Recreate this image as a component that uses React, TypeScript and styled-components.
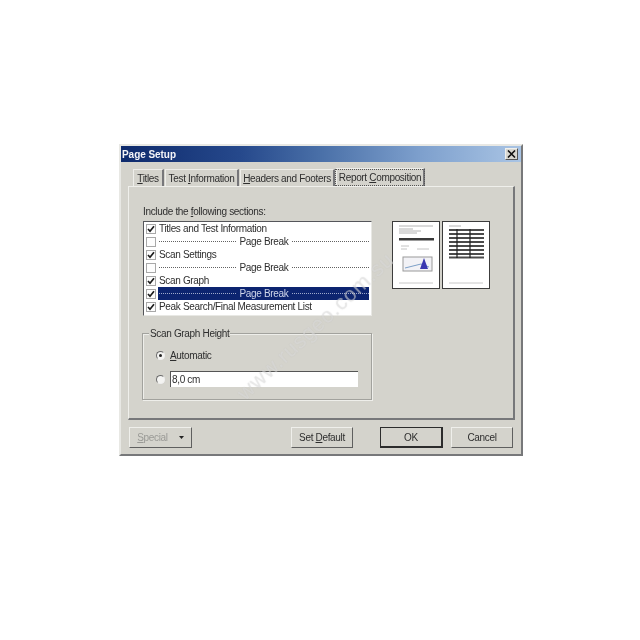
import styled, { createGlobalStyle } from "styled-components";

const GlobalStyle = createGlobalStyle`
  html, body {
    margin: 0;
    padding: 0;
    background: #fff;
  }
  body {
    font-family: "Liberation Sans", Arial, sans-serif;
    font-size: 10px;
    letter-spacing: -0.33px;
    color: #2e2e2e;
  }
`;

const Page = styled.div`
  width: 640px;
  height: 640px;
  padding: 144px 0 0 119px;
  box-sizing: border-box;
`;

const Dialog = styled.div`
  position: relative;
  width: 404px;
  height: 312px;
  box-sizing: border-box;
  background: #d4d3cc;
  border: 2px solid;
  border-color: #e8e8e4 #77787a #77787a #e8e8e4;
  display: flex;
  flex-direction: column;
  filter: blur(0.45px);
  overflow: hidden;
`;

const TitleBar = styled.div`
  height: 16px;
  flex: none;
  display: flex;
  align-items: center;
  justify-content: space-between;
  padding: 0 3px 0 1px;
  background: linear-gradient(90deg, #0e2a6c 0%, #26498c 30%, #4a70a8 50%, #7ea0cd 75%, #a9c4e4 100%);
`;

const TitleText = styled.span`
  color: #f4f4f8;
  font-weight: bold;
  font-size: 10px;
  letter-spacing: -0.05px;
`;

const CloseButton = styled.div`
  width: 13px;
  height: 12px;
  box-sizing: border-box;
  background: #d8d7d0;
  border: 1px solid;
  border-color: #f0f0ee #555 #555 #f0f0ee;
  display: flex;
  align-items: center;
  justify-content: center;
`;

const Tabs = styled.div`
  display: flex;
  align-items: flex-end;
  height: 18px;
  margin: 6px 0 0 12px;
  gap: 1px;
  flex: none;
`;

const Tab = styled.div<{ $width: number; $active?: boolean }>`
  width: ${(p) => p.$width}px;
  height: ${(p) => (p.$active ? 18 : 17)}px;
  box-sizing: border-box;
  display: flex;
  align-items: center;
  justify-content: center;
  white-space: nowrap;
  border-top: 1px solid #eeeeea;
  border-left: 1px solid #eeeeea;
  border-right: 2px solid #77777a;
  span {
    ${(p) => p.$active && "outline: 1px dotted #555; padding: 2px 3px;"}
  }
  u {
    text-underline-offset: 1px;
  }
`;

const Panel = styled.div`
  width: 387px;
  height: 234px;
  margin-left: 7px;
  box-sizing: border-box;
  flex: none;
  border: 1px solid;
  border-width: 1px 2px 2px 1px;
  border-color: #efefeb #77787a #77787a #efefeb;
  padding: 18px 0 0 14px;
`;

const SectionLabel = styled.div`
  height: 16px;
  line-height: 14px;
`;

const TopRow = styled.div`
  display: flex;
  align-items: flex-start;
`;

const SectionList = styled.div`
  width: 229px;
  height: 95px;
  box-sizing: border-box;
  background: #fff;
  border: 1px solid;
  border-color: #55565a #e8e8e4 #e8e8e4 #55565a;
  padding: 0 0 0 2px;
`;

const Row = styled.div`
  display: flex;
  align-items: center;
  height: 13px;
`;

const CheckBox = styled.div`
  width: 10px;
  height: 10px;
  flex: none;
  box-sizing: border-box;
  border: 1px solid #a8a8a8;
  background: #fdfdfd;
  display: flex;
  align-items: center;
  justify-content: center;
`;

const RowText = styled.div<{ $selected?: boolean }>`
  flex: 1;
  margin: 0 2px 0 2px;
  height: 13px;
  line-height: 13px;
  white-space: nowrap;
  overflow: hidden;
  display: flex;
  align-items: center;
  gap: 4px;
  padding-left: 1px;
  background: ${(p) => (p.$selected ? "#0c2470" : "transparent")};
  color: ${(p) => (p.$selected ? "#cfd6ea" : "#2e2e2e")};
`;

const Dashes = styled.div`
  flex: 1;
  border-top: 1px dotted currentColor;
  opacity: 0.75;
`;

const Previews = styled.div`
  display: flex;
  gap: 2px;
  margin-left: 20px;
`;

const Sheet = styled.div`
  width: 48px;
  height: 68px;
  box-sizing: border-box;
  background: #fff;
  border: 1px solid #3c3c3c;
  svg {
    display: block;
    filter: blur(0.4px);
  }
`;

const GroupBox = styled.div`
  position: relative;
  width: 230px;
  height: 67px;
  box-sizing: border-box;
  margin: 17px 0 0 -1px;
  border: 1px solid #a2a29d;
  box-shadow: 1px 1px 0 #eeeeea, inset 1px 1px 0 #eeeeea;
  padding: 13px 0 0 13px;
`;

const Legend = styled.div`
  position: absolute;
  top: -7px;
  left: 6px;
  padding: 0 1px;
  line-height: 13px;
  background: #d4d3cc;
`;

const RadioRow = styled.div<{ $gap: number }>`
  display: flex;
  align-items: center;
  height: 16px;
  margin-bottom: ${(p) => p.$gap}px;
  gap: 5px;
`;

const Radio = styled.div<{ $checked?: boolean }>`
  width: 9px;
  height: 9px;
  box-sizing: border-box;
  border-radius: 50%;
  background: #f4f4f2;
  border: 1px solid;
  border-color: #6b6b6b #eee #eee #6b6b6b;
  display: flex;
  align-items: center;
  justify-content: center;
  &::after {
    content: "";
    width: 3px;
    height: 3px;
    border-radius: 50%;
    background: ${(p) => (p.$checked ? "#222" : "transparent")};
  }
`;

const TextInput = styled.div`
  width: 188px;
  height: 16px;
  box-sizing: border-box;
  background: #fff;
  border-top: 1px solid #555;
  border-left: 1px solid #555;
  padding-left: 1px;
  line-height: 15px;
`;

const Footer = styled.div`
  display: flex;
  align-items: flex-start;
  padding: 7px 0 0 8px;
`;

const Button = styled.div<{ $width: number; $left: number; $default?: boolean; $disabled?: boolean }>`
  width: ${(p) => p.$width}px;
  height: 21px;
  margin-left: ${(p) => p.$left}px;
  box-sizing: border-box;
  display: flex;
  align-items: center;
  justify-content: center;
  gap: 11px;
  color: ${(p) => (p.$disabled ? "#9a9a96" : "#2e2e2e")};
  border: 1px solid;
  border-color: #efefeb #5f5f5f #5f5f5f #efefeb;
  ${(p) => p.$default && "border: 2px solid #2c2c2c; border-top-width: 1px; border-left-width: 1px;"}
`;

const Watermark = styled.div`
  position: absolute;
  left: 92px;
  top: 168px;
  font-size: 21px;
  letter-spacing: 1px;
  white-space: nowrap;
  color: rgba(255, 255, 255, 0.3);
  text-shadow: 0 0 1px rgba(170, 170, 170, 0.45);
  transform: rotate(-43deg);
  pointer-events: none;
`;

const Check = () => (
  <svg width="8" height="8" viewBox="0 0 8 8">
    <path d="M1 4l2 2.2L7 1.2" fill="none" stroke="#1c1c1c" strokeWidth="1.7" />
  </svg>
);

const sections = [
  { text: "Titles and Test Information", checked: true },
  { text: "", checked: false },
  { text: "Scan Settings", checked: true },
  { text: "", checked: false },
  { text: "Scan Graph", checked: true },
  { text: "", checked: true, selected: true },
  { text: "Peak Search/Final Measurement List", checked: true },
];

const PreviewOne = () => (
  <svg width="46" height="66" viewBox="0 0 46 66">
    <path d="M6 4h34M6 7h14M6 9h22M6 11h18" stroke="#b4b4b4" strokeWidth="1" />
    <rect x="6" y="16" width="35" height="2.5" fill="#3a3a3a" />
    <path d="M8 24h8M8 27h6M24 27h12" stroke="#c4c4c4" strokeWidth="1" />
    <rect x="10" y="35" width="29" height="14" fill="#f2f2f6" stroke="#9a9a9a" />
    <path d="M12 46l8-2 8-2 8 3" fill="none" stroke="#7da0c8" strokeWidth="1" />
    <path d="M27 47l4-11 4 11z" fill="#3a37b0" />
    <path d="M6 61h34" stroke="#c8c8c8" strokeWidth="1" />
  </svg>
);

const PreviewTwo = () => (
  <svg width="46" height="66" viewBox="0 0 46 66">
    <path d="M6 4h12" stroke="#b4b4b4" strokeWidth="1" />
    <path
      d="M6 8h35M6 12h35M6 16h35M6 20h35M6 24h35M6 28h35M6 32h35M6 35.5h35"
      stroke="#1e1e1e"
      strokeWidth="2"
      opacity="0.8"
    />
    <path d="M14 7v29M27 7v29" stroke="#222" strokeWidth="1.2" />
    <path d="M6 61h34" stroke="#c8c8c8" strokeWidth="1" />
  </svg>
);

function App() {
  return (
    <>
      <GlobalStyle />
      <Page>
        <Dialog>
          <TitleBar>
            <TitleText>Page Setup</TitleText>
            <CloseButton>
              <svg width="9" height="8" viewBox="0 0 9 8">
                <path d="M1 0.5l7 7M8 0.5l-7 7" stroke="#111" strokeWidth="1.6" />
              </svg>
            </CloseButton>
          </TitleBar>
          <Tabs>
            <Tab $width={31}>
              <span><u>T</u>itles</span>
            </Tab>
            <Tab $width={74}>
              <span>Test <u>I</u>nformation</span>
            </Tab>
            <Tab $width={95}>
              <span><u>H</u>eaders and Footers</span>
            </Tab>
            <Tab $width={89} $active>
              <span>Report <u>C</u>omposition</span>
            </Tab>
          </Tabs>
          <Panel>
            <SectionLabel>
              Include the <u>f</u>ollowing sections:
            </SectionLabel>
            <TopRow>
              <SectionList>
                {sections.map((s, i) => (
                  <Row key={i}>
                    <CheckBox>{s.checked && <Check />}</CheckBox>
                    <RowText $selected={s.selected}>
                      {s.text || (
                        <>
                          <Dashes />
                          Page Break
                          <Dashes />
                        </>
                      )}
                    </RowText>
                  </Row>
                ))}
              </SectionList>
              <Previews>
                <Sheet>
                  <PreviewOne />
                </Sheet>
                <Sheet>
                  <PreviewTwo />
                </Sheet>
              </Previews>
            </TopRow>
            <GroupBox>
              <Legend>Scan Graph Height</Legend>
              <RadioRow $gap={8}>
                <Radio $checked />
                <span><u>A</u>utomatic</span>
              </RadioRow>
              <RadioRow $gap={0}>
                <Radio />
                <TextInput>8,0 cm</TextInput>
              </RadioRow>
            </GroupBox>
          </Panel>
          <Footer>
            <Button $width={63} $left={0} $disabled>
              <span><u>S</u>pecial</span>
              <svg width="5" height="3" viewBox="0 0 5 3">
                <path d="M0 0h5L2.5 3z" fill="#222" />
              </svg>
            </Button>
            <Button $width={62} $left={99}>
              <span>Set <u>D</u>efault</span>
            </Button>
            <Button $width={63} $left={27} $default>
              OK
            </Button>
            <Button $width={62} $left={8}>
              Cancel
            </Button>
          </Footer>
          <Watermark>www.rusgeo.com.su</Watermark>
        </Dialog>
      </Page>
    </>
  );
}

export default App;
